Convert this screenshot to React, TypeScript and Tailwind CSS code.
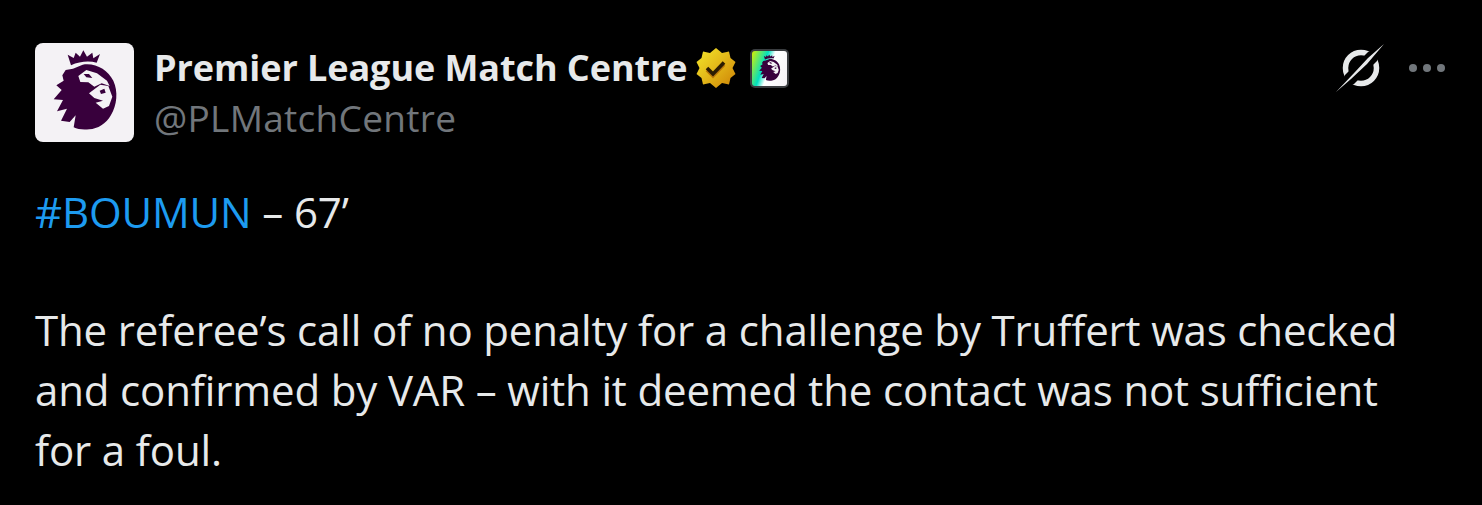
import { useId } from "react";

function Lion({ className }: { className?: string }) {
  return (
    <svg viewBox="-48 -21 297 297" className={className}>
      <path
        fill="#38003c"
        d="M60 46 L50 14 L68 24 L74 8 L87 20 L97 1 L108 20 L124 8 L127 25 L147 12 L137 38 C115 32 85 34 60 46 Z"
      />
      <path
        fill="#38003c"
        d="M44 60 L66 56 L95 44 C135 38 170 60 187 92 C202 125 198 165 180 195 C165 222 140 236 115 238 C95 240 80 238 68 232 L74 196 L56 216 L30 212 L48 176 L18 184 L36 150 L8 148 L32 120 L16 106 L38 92 L34 76 Z"
      />
      <path
        fill="#f4f2f5"
        d="M82 78 L106 60 L138 70 L168 92 L176 108 L152 100 L130 110 L112 97 L88 96 Z"
      />
      <path
        fill="#f4f2f5"
        d="M114 130 L148 104 L172 108 L184 140 L174 168 L156 176 L134 158 L156 152 L130 144 Z"
      />
      <path fill="#38003c" d="M146 122 L160 116 L164 128 L150 132 Z" />
      <path fill="#38003c" d="M98 72 L114 72 L124 84 L106 82 Z" />
    </svg>
  );
}

function VerifiedBadge() {
  const id = useId();
  return (
    <svg viewBox="0 0 40 42" className="h-[42px] w-10 shrink-0">
      <defs>
        <linearGradient id={id} x1="0" y1="0" x2="1" y2="1">
          <stop offset="0" stopColor="#f4e72a" />
          <stop offset="0.5" stopColor="#e2b719" />
          <stop offset="1" stopColor="#cd8105" />
        </linearGradient>
      </defs>
      <path
        fill={`url(#${id})`}
        d="M20 1 L26 6 L33 4.5 L34.5 11 L39.5 15 L36.5 21 L39.5 27 L34.5 31 L33 37.5 L26 36 L20 41 L14 36 L7 37.5 L5.5 31 L.5 27 L3.5 21 L.5 15 L5.5 11 L7 4.5 L14 6 Z"
      />
      <path fill="none" stroke="#b9770a" strokeWidth="3.6" d="M11 23 L17 29 L28 17.5" />
      <path fill="none" stroke="#2b1c02" strokeWidth="3.6" d="M11 21 L17 27 L28 15.5" />
    </svg>
  );
}

function MutedIcon() {
  return (
    <svg viewBox="0 0 60 60" className="h-[60px] w-[60px]">
      <circle cx="30" cy="30" r="15.5" fill="none" stroke="#e7e9ea" strokeWidth="5.5" />
      <path fill="#000" d="M50 10 L46 23 L23 46 L10 50 L14 37 L37 14 Z" />
      <path fill="#e7e9ea" d="M53 6 L37 20 L24 34 L5 54 L20 41 L36 26 Z" />
    </svg>
  );
}

function Dots() {
  return (
    <div className="flex gap-[6px]">
      <span className="h-2 w-2 rounded-full bg-[#71767b]" />
      <span className="h-2 w-2 rounded-full bg-[#71767b]" />
      <span className="h-2 w-2 rounded-full bg-[#71767b]" />
    </div>
  );
}

export default function App() {
  return (
    <div className="h-[505px] w-[1482px] overflow-hidden bg-black px-[35px] pt-[43px] font-['Open_Sans',sans-serif] text-[#e7e9ea]">
      <header className="flex items-start">
        <div className="flex h-[99px] w-[99px] shrink-0 items-center justify-center overflow-hidden rounded-[8px] bg-[#f4f2f5]">
          <Lion className="h-[99px] w-[99px]" />
        </div>
        <div className="ml-[20px] flex-1">
          <div className="flex h-[50px] items-center">
            <span className="text-[36px] leading-[50px] font-bold tracking-[-0.07px]">
              Premier League Match Centre
            </span>
            <span className="ml-[8px]">
              <VerifiedBadge />
            </span>
            <div className="ml-[14px] h-[39px] w-[39px] rounded-[5px] bg-[#3a3d40] p-[2px]">
              <div className="flex h-full w-full items-center justify-center rounded-[3px] bg-[linear-gradient(110deg,#d8f000_0%,#00e0c0_35%,#ffffff_50%,#f4f2f5_100%)]">
                <Lion className="h-[33px] w-[33px]" />
              </div>
            </div>
          </div>
          <div className="text-[37px] leading-[50px] tracking-[0.3px] text-[#71767b]">@PLMatchCentre</div>
        </div>
        <div className="flex h-[50px] items-center">
          <MutedIcon />
          <div className="ml-[18px] mr-[2px]">
            <Dots />
          </div>
        </div>
      </header>
      <div className="mt-[39px] w-[1380px] text-[42px] leading-[60px] tracking-[-0.15px]">
        <p>
          <span className="text-[#1d9bf0]">#BOUMUN</span> – 67’
        </p>
        <p className="mt-[58px]">
          The referee’s call of no penalty for a challenge by Truffert was checked and confirmed by VAR – with it
          deemed the contact was not sufficient for a foul.
        </p>
      </div>
    </div>
  );
}
